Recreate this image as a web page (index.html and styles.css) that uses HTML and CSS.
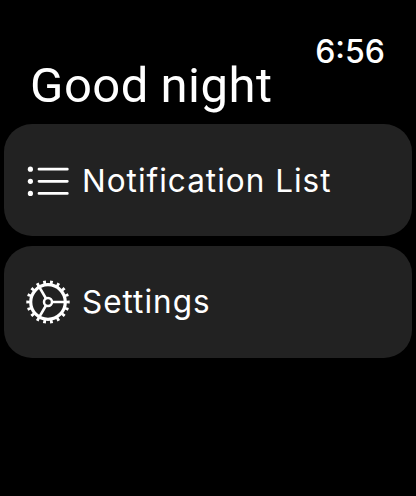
FILE: index.html
```html
<!DOCTYPE html>
<html lang="en">
<head>
<meta charset="utf-8">
<title>Good night</title>
<link rel="stylesheet" href="styles.css">
</head>
<body>
<header class="header">
<h1 class="title">Good night</h1>
<time class="clock">6<span class="colon">:</span>56</time>
</header>
<main class="menu">
<a class="item"><svg class="icon" viewBox="0 0 48 48"><g fill="currentColor"><circle cx="6.4" cy="13.2" r="2.6"/><circle cx="6.4" cy="25.3" r="2.6"/><circle cx="6.4" cy="37.4" r="2.6"/></g><path d="M15 13.2H43.3M15 25.3H43.3M15 37.4H43.3" stroke="currentColor" stroke-width="2.8" stroke-linecap="round"/></svg><span class="label">Notification List</span></a>
<a class="item"><svg class="icon" viewBox="0 0 48 48" fill="none" stroke="currentColor"><circle cx="24" cy="24" r="17.3" stroke-width="3.2"/><circle cx="24" cy="24" r="19.9" stroke-width="3.6" pathLength="180" stroke-dasharray="4 6" stroke-dashoffset="2"/><circle cx="24" cy="24" r="4" stroke-width="2.5"/><path d="M28 24H41M22 20.5L15.5 9.3M22 27.5L15.5 38.7" stroke-width="2.6"/></svg><span class="label settings-label">Settings</span></a>
</main>
</body>
</html>
```
FILE: styles.css
```css
* { box-sizing: border-box; }
body { margin: 0; height: 496px; background: #000; color: #fff; font-family: Inter, "Liberation Sans", sans-serif; overflow: hidden; }
.header { height: 124px; display: flex; justify-content: space-between; padding: 34px 31px 0 30px; }
.title { margin: 22px 0 0; font-family: Roboto, Inter, sans-serif; font-size: 49px; line-height: 60px; font-weight: 400; letter-spacing: 0.5px; word-spacing: -1px; white-space: nowrap; }
.clock { font-size: 32px; line-height: 36px; font-weight: 500; }
.colon { position: relative; top: -2px; }
.menu { display: flex; flex-direction: column; gap: 10px; padding: 0 4px; }
.item { height: 112px; display: flex; align-items: center; background: #222; border-radius: 28px; padding-left: 20px; }
.icon { width: 48px; height: 48px; flex: none; }
.label { margin-left: 10px; font-size: 31.5px; font-weight: 400; letter-spacing: 1px; white-space: nowrap; }
.settings-label { margin-bottom: 2px; }
```
